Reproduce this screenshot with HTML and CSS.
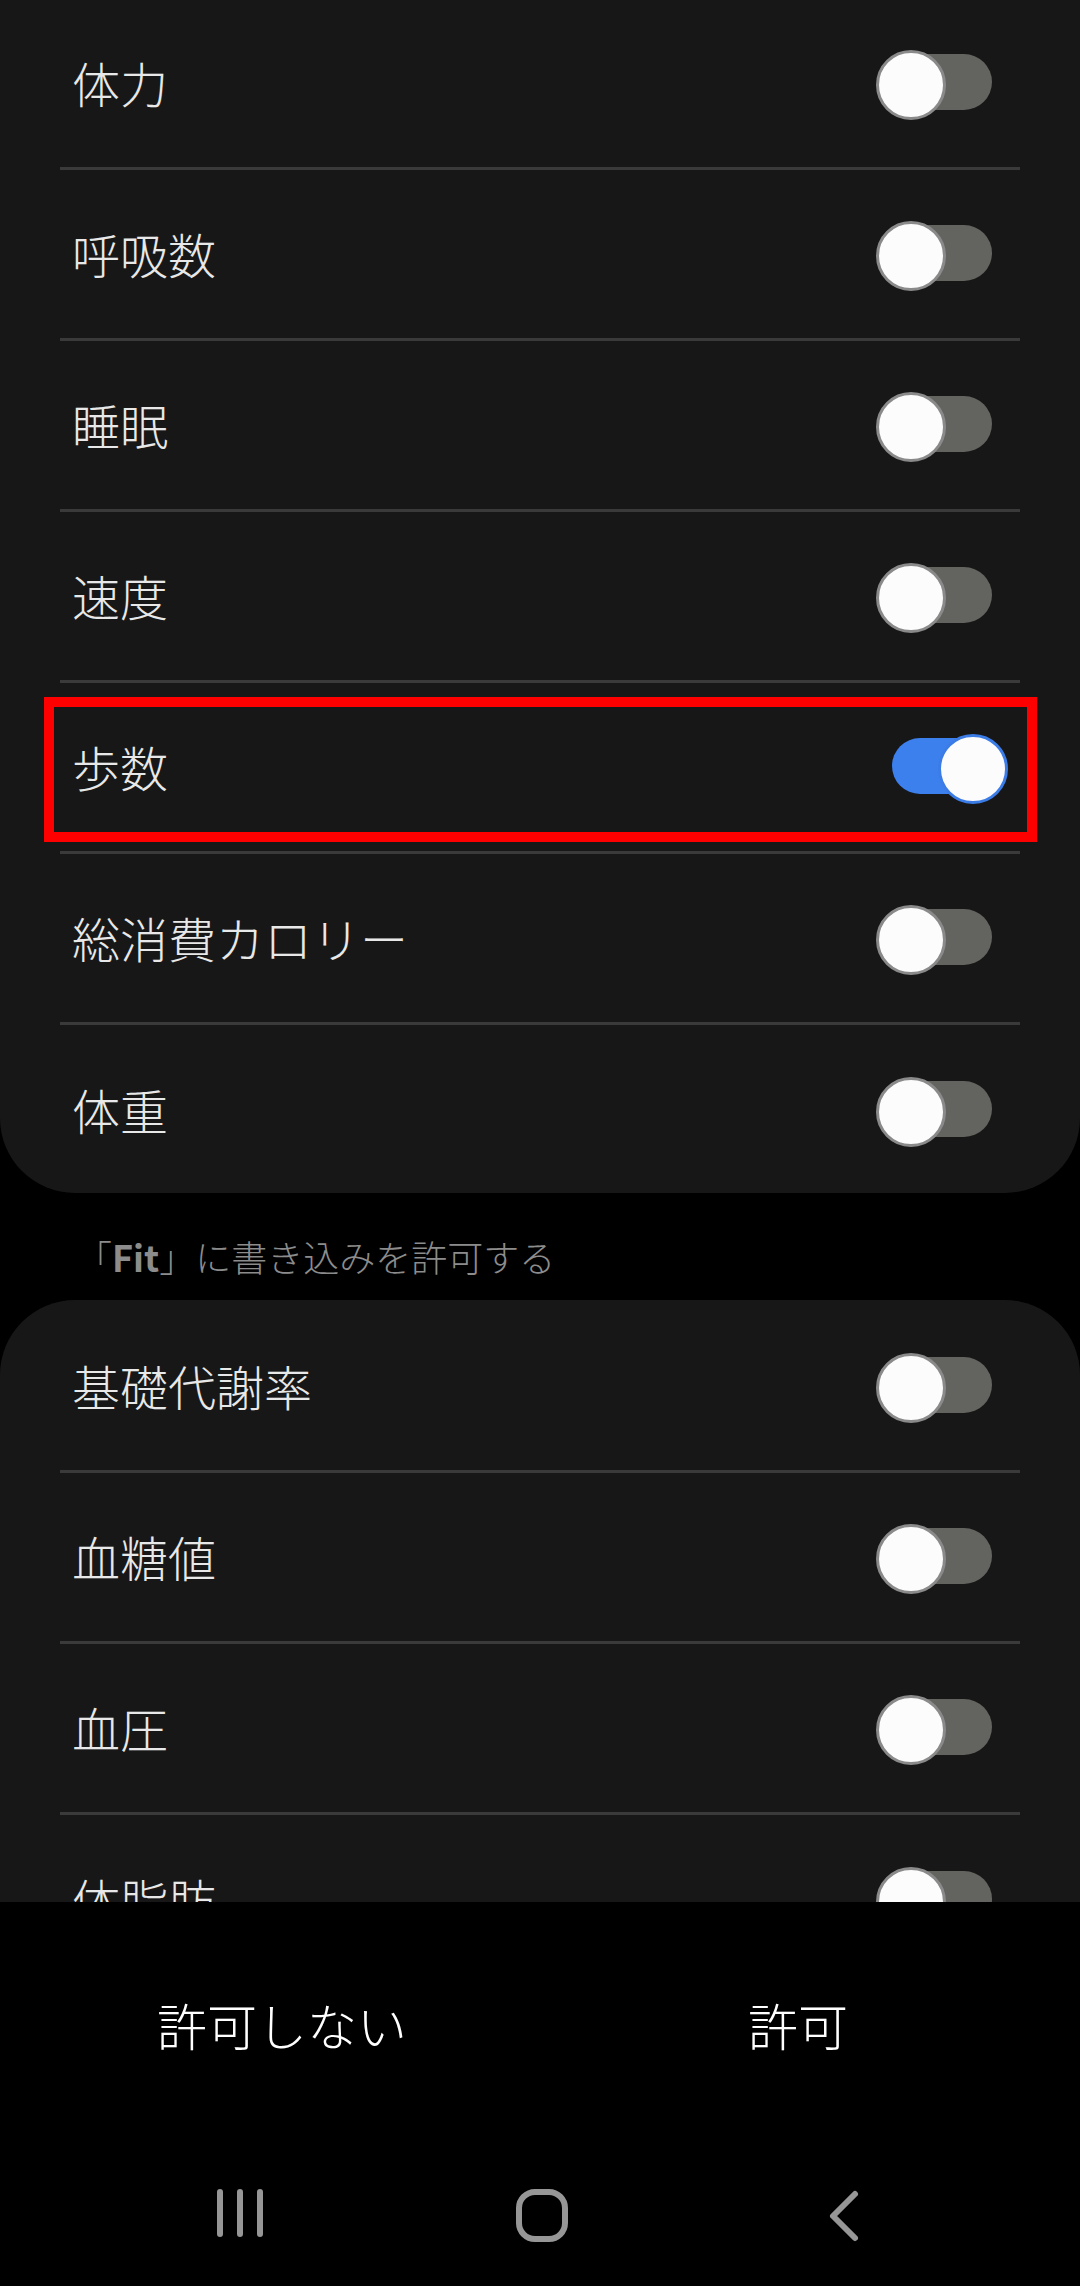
FILE: index.html
```html
<!DOCTYPE html>
<html lang="ja">
<head>
    <meta charset="UTF-8">
    <meta name="viewport" content="width=device-width, initial-scale=1.0">
    <title>データへのアクセス</title>
    <link rel="stylesheet" href="styles.css">
</head>
<body>
<div class="screen">

    <!-- Scrolled permission list -->
    <main class="scroll">
        <section class="card card-read">
            <div class="row"><span class="label">体力</span><span class="switch"></span></div>
            <div class="row"><span class="label">呼吸数</span><span class="switch"></span></div>
            <div class="row"><span class="label">睡眠</span><span class="switch"></span></div>
            <div class="row"><span class="label">速度</span><span class="switch"></span></div>
            <div class="row highlighted"><span class="label">歩数</span><span class="switch on"></span></div>
            <div class="row"><span class="label">総消費カロリー</span><span class="switch"></span></div>
            <div class="row"><span class="label">体重</span><span class="switch"></span></div>
        </section>

        <h2 class="section-title">「<b>Fit</b>」に書き込みを許可する</h2>

        <section class="card card-write">
            <div class="row"><span class="label">基礎代謝率</span><span class="switch"></span></div>
            <div class="row"><span class="label">血糖値</span><span class="switch"></span></div>
            <div class="row"><span class="label">血圧</span><span class="switch"></span></div>
            <div class="row"><span class="label">体脂肪</span><span class="switch"></span></div>
        </section>
    </main>

    <!-- Dialog buttons -->
    <div class="actions">
        <button class="action">許可しない</button>
        <button class="action">許可</button>
    </div>

    <!-- System navigation bar -->
    <nav class="navbar">
        <span class="nav-btn">
            <svg width="60" height="60" viewBox="0 0 60 60">
                <path d="M10 6V48M30 6V48M50 6V48" stroke="#969696" stroke-width="6" stroke-linecap="round" fill="none"/>
            </svg>
        </span>
        <span class="nav-btn">
            <svg width="60" height="60" viewBox="0 0 60 60">
                <rect x="7" y="6" width="46" height="47" rx="16" stroke="#969696" stroke-width="6" fill="none"/>
            </svg>
        </span>
        <span class="nav-btn">
            <svg width="60" height="60" viewBox="0 0 60 60">
                <path d="M41 8L19 30L41 52" stroke="#969696" stroke-width="6" stroke-linecap="round" stroke-linejoin="round" fill="none"/>
            </svg>
        </span>
    </nav>

</div>
</body>
</html>
```

FILE: styles.css
```css
* {
    margin: 0;
    padding: 0;
    box-sizing: border-box;
}

body {
    background-color: #000;
    font-family: 'Noto Sans CJK JP', 'Noto Sans', sans-serif;
    color: #e8e8e8;
}

.screen {
    width: 1080px;
    height: 2286px;
    display: flex;
    flex-direction: column;
    overflow: hidden;
}

.scroll {
    height: 1902px;
    flex-shrink: 0;
    overflow: hidden;
}

.card {
    background-color: #171717;
    border-radius: 75px;
}

.card-read {
    margin-top: -1px;
    border-top-left-radius: 0;
    border-top-right-radius: 0;
}

.card-write {
    padding-top: 2px;
}

.row {
    position: relative;
    height: 171px;
    margin: 0 60px;
    padding: 0 28px 3px 12px;
    display: flex;
    align-items: center;
    justify-content: space-between;
    border-bottom: 3px solid #3a3a3a;
}

.row:last-child {
    border-bottom: none;
    height: 168px;
    padding-bottom: 0;
}

.label {
    font-size: 48px;
    line-height: 60px;
    font-weight: 300;
    color: #e8e8e8;
}

.highlighted::before {
    content: '';
    position: absolute;
    top: 14px;
    left: -16px;
    right: -17px;
    bottom: 9px;
    border: 10px solid #ff0000;
}

/* Toggle switch */
.switch {
    position: relative;
    width: 100px;
    height: 56px;
    border-radius: 28px;
    background-color: #63645f;
}

.switch::after {
    content: '';
    position: absolute;
    top: -4px;
    left: -16px;
    width: 64px;
    height: 64px;
    border-radius: 50%;
    background-color: #fcfcfc;
    border: 3px solid #8a8a8a;
}

.switch.on {
    background-color: #3c80ee;
}

.switch.on::after {
    left: auto;
    right: -16px;
    border-color: #3c7ce6;
}

.section-title {
    height: 107px;
    padding: 45px 0 0 76px;
    font-size: 36px;
    line-height: 36px;
    font-weight: 300;
    color: #8c8c8c;
}

.section-title b {
    font-weight: bold;
}

.actions {
    height: 244px;
    flex-shrink: 0;
    display: flex;
    padding: 0 24px;
    background-color: #000;
}

.action {
    flex: 1;
    background: none;
    border: none;
    color: #fff;
    font-family: 'Noto Sans CJK JP', 'Noto Sans', sans-serif;
    font-size: 50px;
    font-weight: 300;
}

.navbar {
    height: 140px;
    flex-shrink: 0;
    display: grid;
    grid-template-columns: repeat(3, 302px);
    justify-content: center;
    align-items: center;
    padding-left: 4px;
    background-color: #000;
}

.nav-btn {
    display: flex;
    justify-content: center;
    align-items: center;
}

.nav-btn svg {
    display: block;
}
```
